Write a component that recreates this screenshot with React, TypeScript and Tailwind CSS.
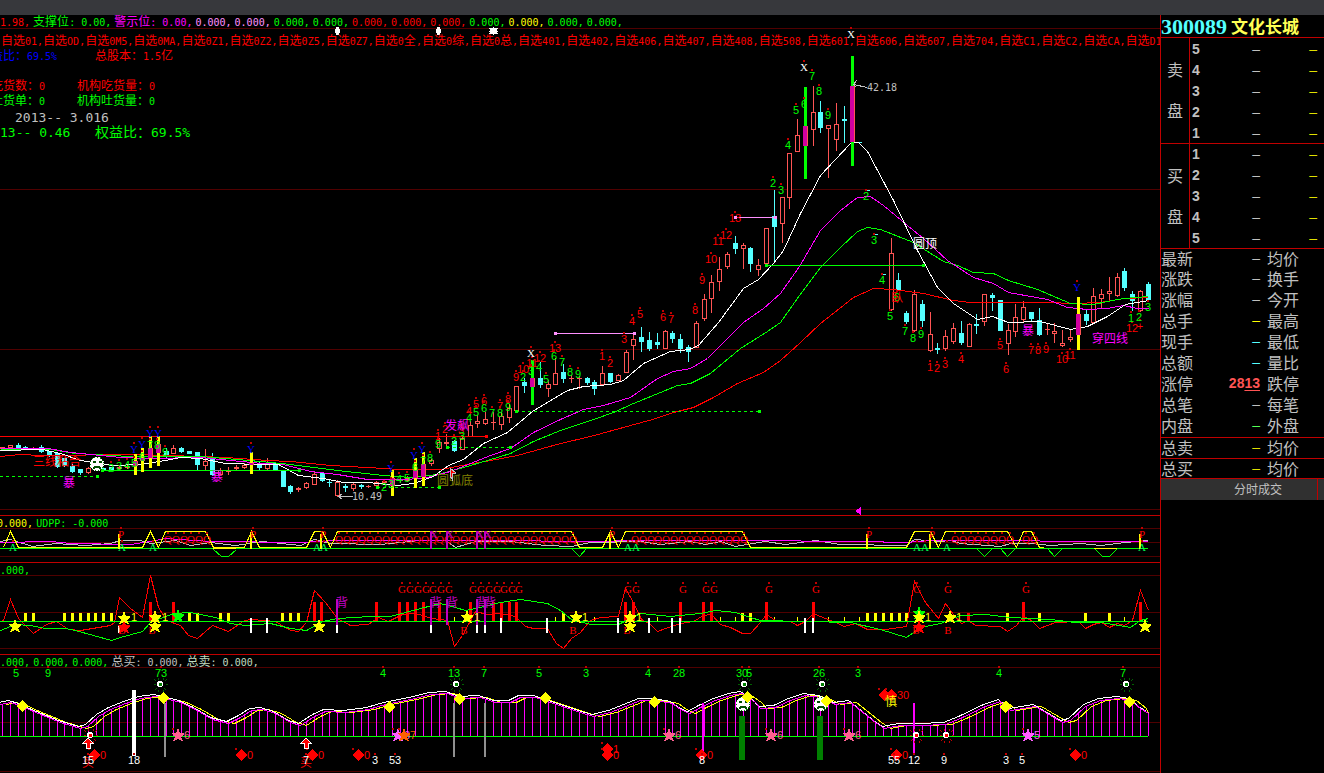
import { Fragment } from 'react';
import type { ReactNode } from 'react';

type Point = [number, number];
type Mark = [x: number, y: number, text: string];
// high, body top, body bottom, low, kind (r = up, b = down)
type Candle = [number, number, number, number, string];

const RED = '#ff0000';
const LIME = '#00ff00';
const YELLOW = '#ffff00';
const MAGENTA = '#ff00ff';
const DOWN = '#54ffff';
const UP = '#ff5454';

const barX = (i: number) => Math.round(2 + 7.795 * i);

const parse = (s: string): Point[] =>
  s.split(' ').map((p) => p.split(',').map(Number) as Point);

const candles: (Candle | null)[] = [
  [447, 447, 449, 449, 'r'], [445, 445, 448, 448, 'r'], [443, 445, 449, 449, 'b'], [446, 447, 449, 449, 'b'],
  [447, 448, 449, 450, 'r'], [445, 447, 452, 453, 'b'], [451, 451, 456, 457, 'b'], [453, 453, 467, 468, 'b'],
  [458, 458, 466, 467, 'b'], [464, 466, 472, 473, 'b'], [469, 469, 473, 475, 'b'], [467, 468, 473, 474, 'r'],
  null, [467, 468, 471, 471, 'b'], [467, 467, 470, 471, 'b'], [466, 467, 469, 470, 'r'],
  [465, 466, 468, 469, 'r'], null, null, null,
  null, [448, 451, 456, 458, 'b'], [445, 448, 454, 454, 'r'], [447, 448, 452, 453, 'b'],
  [451, 451, 454, 454, 'b'], [452, 452, 465, 470, 'b'], [449, 461, 466, 470, 'r'], [453, 459, 475, 476, 'b'],
  [468, 470, 475, 475, 'r'], [467, 470, 472, 475, 'r'], [465, 467, 469, 471, 'r'], [463, 465, 468, 469, 'r'],
  null, [462, 463, 468, 470, 'b'], [458, 464, 469, 470, 'r'], [462, 463, 471, 471, 'b'],
  [471, 471, 487, 487, 'b'], [485, 486, 492, 494, 'b'], [487, 488, 490, 492, 'r'], [482, 483, 488, 489, 'r'],
  [472, 474, 485, 485, 'r'], [473, 473, 481, 482, 'b'], [479, 482, 483, 487, 'b'], [480, 482, 496, 497, 'r'],
  [484, 486, 488, 492, 'b'], [483, 484, 489, 491, 'r'], [484, 485, 487, 489, 'b'], [485, 486, 487, 488, 'r'],
  [481, 482, 486, 487, 'r'], [479, 481, 483, 484, 'r'], null, [478, 480, 481, 483, 'r'],
  [476, 478, 481, 482, 'r'], null, null, [459, 460, 464, 466, 'r'],
  [438, 442, 449, 453, 'r'], [434, 442, 444, 448, 'r'], [440, 441, 451, 452, 'b'], [436, 438, 450, 450, 'r'],
  [421, 425, 437, 437, 'r'], [415, 421, 424, 428, 'r'], [412, 419, 424, 425, 'r'], [412, 422, 423, 430, 'r'],
  [412, 416, 425, 430, 'r'], [404, 408, 418, 423, 'r'], [386, 386, 411, 412, 'r'], [378, 382, 386, 393, 'b'],
  null, [362, 378, 385, 388, 'b'], [380, 384, 389, 397, 'r'], [358, 373, 385, 385, 'r'],
  [364, 372, 379, 383, 'b'], [375, 378, 379, 383, 'r'], [376, 378, 379, 389, 'r'], [377, 378, 383, 385, 'b'],
  [380, 382, 389, 395, 'b'], [366, 373, 385, 385, 'r'], [373, 373, 382, 383, 'b'], [374, 375, 381, 381, 'r'],
  [350, 352, 373, 373, 'r'], [333, 339, 346, 360, 'r'], [327, 337, 342, 352, 'b'], [332, 340, 349, 351, 'b'],
  [333, 342, 345, 349, 'b'], [330, 331, 349, 349, 'r'], [331, 333, 339, 343, 'b'], [334, 339, 349, 353, 'b'],
  [345, 347, 352, 362, 'b'], [321, 323, 348, 348, 'r'], [294, 299, 319, 321, 'r'], [275, 282, 299, 313, 'r'],
  [257, 269, 282, 291, 'r'], [252, 254, 267, 269, 'r'], [236, 243, 249, 254, 'b'], [243, 245, 249, 269, 'r'],
  [247, 248, 264, 272, 'b'], [259, 265, 270, 276, 'r'], [228, 228, 264, 265, 'r'], [190, 216, 227, 262, 'b'],
  [197, 197, 224, 243, 'r'], [153, 153, 198, 209, 'r'], [119, 135, 152, 152, 'r'], null,
  [86, 112, 130, 146, 'r'], [101, 112, 128, 133, 'b'], [125, 125, 129, 178, 'r'], [103, 124, 140, 151, 'r'],
  [106, 119, 121, 143, 'b'], null, [142, 142, 143, 143, 'b'], [190, 190, 191, 191, 'b'],
  [234, 234, 235, 235, 'b'], [274, 274, 275, 275, 'b'], [238, 253, 310, 311, 'r'], [273, 280, 290, 291, 'b'],
  [311, 313, 322, 324, 'b'], [290, 294, 331, 332, 'r'], [300, 304, 321, 327, 'b'], [312, 334, 351, 352, 'r'],
  [343, 348, 350, 354, 'b'], [330, 336, 349, 351, 'r'], [323, 328, 342, 344, 'r'], [321, 333, 343, 345, 'b'],
  [323, 324, 347, 347, 'r'], [314, 324, 326, 334, 'b'], [294, 294, 322, 326, 'r'], [293, 295, 298, 311, 'b'],
  [300, 300, 331, 331, 'b'], [324, 330, 344, 355, 'r'], [304, 317, 332, 337, 'r'], [301, 307, 320, 322, 'r'],
  [312, 312, 319, 322, 'b'], [308, 320, 335, 336, 'b'], [323, 329, 330, 335, 'r'], [323, 331, 334, 343, 'r'],
  [330, 343, 346, 347, 'r'], [330, 337, 340, 342, 'r'], null, [310, 314, 321, 325, 'b'],
  [288, 296, 323, 323, 'r'], [289, 294, 299, 309, 'r'], [277, 291, 294, 300, 'r'], [273, 277, 296, 297, 'r'],
  [268, 271, 288, 291, 'b'], [291, 294, 301, 311, 'b'], [290, 291, 311, 312, 'r'], [282, 284, 300, 301, 'b'],
];

// full bar from top to bottom, coloured core from a to b
const signalBars = [
  { i: 17, top: 454, bottom: 475, a: 461, b: 466, color: YELLOW },
  { i: 18, top: 448, bottom: 472, a: 458, b: 461, color: YELLOW },
  { i: 19, top: 436, bottom: 468, a: 448, b: 458, color: YELLOW },
  { i: 20, top: 436, bottom: 466, a: 444, b: 453, color: YELLOW },
  { i: 32, top: 452, bottom: 474, a: 463, b: 465, color: YELLOW },
  { i: 50, top: 470, bottom: 496, a: 478, b: 486, color: YELLOW },
  { i: 53, top: 458, bottom: 488, a: 470, b: 478, color: YELLOW },
  { i: 54, top: 452, bottom: 486, a: 464, b: 477, color: YELLOW },
  { i: 68, top: 360, bottom: 405, a: 378, b: 387, color: LIME },
  { i: 103, top: 87, bottom: 179, a: 126, b: 146, color: LIME },
  { i: 109, top: 56, bottom: 166, a: 86, b: 142, color: LIME },
  { i: 138, top: 297, bottom: 350, a: 314, b: 335, color: YELLOW },
];

const averages = [
  {
    color: RED,
    points:
      '0,456 20,454 40,455 133,454 200,456 225,457 267,460 290,461 330,465 367,467 400,469 440,469 467,464 490,460 517,455 560,443 590,436 652,419 673,412 693,407 713,397 737,383 763,372 780,360 799,343 820,323 853,297 873,288 893,289 923,293 953,300 970,302 1047,302 1073,303 1100,302 1123,298 1148,297',
  },
  {
    color: LIME,
    points:
      '0,449 50,449 75,453 130,456 200,456 260,461 290,464 337,470 383,475 410,477 437,474 463,467 487,460 510,453 533,441 560,430 593,419 613,412 633,403 660,392 677,385 690,383 710,373 740,348 767,331 780,322 799,295 820,267 840,247 857,231 867,227 880,229 913,242 943,261 957,265 973,272 993,273 1008,280 1037,289 1070,303 1093,304 1107,301 1123,298 1148,296',
  },
  {
    color: MAGENTA,
    points:
      '0,448 48,448 70,452 100,455 120,457 150,458 200,457 220,459 262,463 283,464 310,471 337,474 367,479 400,479 423,478 450,471 470,463 490,455 510,448 533,432 560,419 583,409 603,405 630,397 657,378 673,371 690,368 707,358 743,322 763,308 780,293 799,266 820,230 840,210 857,197 870,196 883,205 913,230 923,238 947,260 973,277 993,283 1008,292 1047,299 1067,307 1087,309 1107,308 1123,305 1137,308 1148,308',
  },
  {
    color: '#ffffff',
    points:
      '0,450 42,449 60,453 80,460 112,465 140,464 165,460 180,457 200,458 225,463 262,464 278,464 298,475 323,478 343,482 367,482 397,485 413,483 433,476 448,465 463,459 483,443 507,432 532,411 567,390 583,386 610,384 623,380 643,363 670,351 689,349 698,345 718,322 743,288 758,279 773,263 783,250 800,213 820,175 850,143 858,142 867,151 893,200 917,250 937,287 953,303 977,319 992,316 1008,322 1040,321 1070,329 1087,326 1107,316 1125,304 1148,300',
  },
];

const levels = [
  { x1: 0, x2: 486, y: 436, color: RED },
  { x1: 102, x2: 299, y: 470, color: LIME },
  { x1: 0, x2: 97, y: 476, color: LIME, dash: true },
  { x1: 377, x2: 439, y: 487, color: LIME, dash: true },
  { x1: 447, x2: 510, y: 447, color: LIME, dash: true },
  { x1: 516, x2: 759, y: 411, color: LIME, dash: true },
  { x1: 766, x2: 923, y: 265, color: LIME },
  { x1: 555, x2: 634, y: 333, color: '#ff90ff' },
  { x1: 735, x2: 775, y: 217, color: '#ff90ff' },
];

const greenCounts: Mark[] = [
  [111, 468, '2'], [119, 466, '3'], [127, 465, '4'], [134, 463, '5'], [142, 457, '6'], [150, 445, '7'],
  [157, 445, '8'], [165, 452, '9'], [384, 487, '2'], [391, 484, '3'], [399, 479, '4'], [407, 478, '5'],
  [415, 467, '6'], [423, 461, '7'], [430, 458, '8'], [438, 444, '9'], [454, 441, '2'], [462, 436, '3'],
  [469, 418, '4'], [476, 412, '5'], [484, 408, '6'], [492, 413, '7'], [500, 413, '8'], [508, 407, '9'],
  [523, 377, '2'], [531, 371, '3'], [539, 367, '4'], [546, 379, '5'], [554, 356, '6'], [562, 362, '7'],
  [570, 372, '8'], [578, 374, '9'], [773, 183, '2'], [781, 190, '3'], [788, 145, '4'], [796, 110, '5'],
  [804, 104, '6'], [812, 76, '7'], [819, 91, '8'], [828, 115, '9'], [866, 196, '2'], [874, 240, '3'],
  [882, 280, '4'], [890, 316, '5'], [897, 297, '6'], [905, 331, '7'], [913, 338, '8'], [921, 334, '9'],
  [1131, 318, '1'], [1139, 317, '2'], [1148, 307, '3'],
];

const redCounts: Mark[] = [
  [438, 436, '1'], [445, 429, '2'], [461, 430, '3'], [469, 411, '4'], [476, 404, '5'], [484, 401, '6'],
  [500, 406, '7'], [508, 399, '8'], [516, 377, '9'], [523, 369, '10'], [532, 363, '11'], [540, 358, '12'],
  [555, 348, '13'], [602, 356, '1'], [610, 363, '2'], [624, 339, '3'], [632, 321, '4'], [640, 314, '5'],
  [663, 317, '6'], [671, 319, '7'], [695, 310, '8'], [702, 280, '9'], [711, 259, '10'], [718, 241, '11'],
  [726, 235, '12'], [735, 218, '13'], [930, 367, '1'], [937, 368, '2'], [945, 364, '3'], [961, 359, '4'],
  [1000, 345, '5'], [1006, 369, '6'], [1031, 350, '7'], [1038, 350, '8'], [1046, 349, '9'], [1062, 359, '10'],
  [1070, 355, '11'], [1132, 328, '12'], [1140, 326, '+'],
];

const blueMarks: Mark[] = [
  [134, 449, 'Y'], [142, 444, 'Y'], [150, 433, 'Y'], [158, 433, 'Y'], [251, 449, 'Y'],
  [391, 468, 'Y'], [414, 455, 'Y'], [422, 449, 'Y'], [1077, 287, 'Y'],
];

const whiteMarks: Mark[] = [[531, 353, 'X'], [804, 67, 'X'], [851, 34, 'X']];

const chartWords = [
  { x: 33, y: 461, text: '三线粘合', color: RED },
  { x: 63, y: 482, text: '暴', color: MAGENTA },
  { x: 211, y: 476, text: '暴', color: MAGENTA },
  { x: 445, y: 425, text: '发飙', color: MAGENTA },
  { x: 437, y: 480, text: '圆弧底', color: '#808000' },
  { x: 913, y: 243, text: '圆顶', color: '#ffffff' },
  { x: 891, y: 297, text: '臥', color: RED },
  { x: 1022, y: 330, text: '暴', color: MAGENTA },
  { x: 1092, y: 338, text: '穿四线', color: MAGENTA },
];

const run = (start: number, count: number, y: number, text: string): Mark[] =>
  Array.from({ length: count }, (_, i) => [Math.round(start + i * 7.8), y, text] as Mark);

const qMarks: Mark[] = [
  ...run(168, 6, 539, 'Q'), ...run(339, 31, 539, 'Q'), ...run(635, 15, 539, 'Q'),
  ...run(955, 8, 539, 'Q'), ...run(1026, 2, 539, 'Q'),
];
const pMarks = [121, 253, 323, 612, 869, 932, 1142].map((x): Mark => [x, 534, 'P']);
const aMarks = [13, 122, 153, 317, 324, 628, 636, 917, 925, 947, 1142].map((x): Mark => [x, 547, 'A']);
const purpleX = [431, 447, 477, 485];

const udYellow =
  '3,547 10,531 18,547 142,547 150,531 158,547 165,531 205,531 213,547 236,547 244,547 251,531 259,547 306,547 314,531 322,531 330,547 337,531 571,531 579,547 586,547 602,547 610,531 618,547 625,531 742,531 750,547 906,547 914,531 930,531 938,547 945,531 1007,531 1016,547 1023,531 1031,531 1039,547 1047,548 1062,548';
const udGrey =
  '0,541 10,539 32,546 55,543 85,545 110,543 120,540 140,540 150,543 175,540 190,545 210,542 235,545 262,541 300,545 314,539 330,543 380,544 420,540 445,540 455,547 475,541 510,541 545,545 571,546 590,542 640,541 660,544 690,541 705,544 720,541 735,546 765,541 785,544 815,540 840,544 906,545 914,539 940,541 950,540 960,543 1000,546 1010,543 1030,543 1050,545 1080,543 1100,545 1125,542 1148,540';
const udMagenta =
  '0,542 50,541 70,543 130,544 150,541 165,538 210,541 300,542 337,540 500,540 580,541 650,540 740,540 860,541 906,542 930,540 1148,541';
const udDips = [
  '213,549 221,556 228,556 236,549', '571,548 579,556 586,548', '976,548 984,556 992,548',
  '1000,548 1007,556 1015,548', '1047,548 1054,556 1062,548', '1094,548 1102,556 1109,556 1117,548',
];

const swingRed =
  '0,621 3,620 10,599 18,618 33,633 46,624 56,621 68,629 80,630 110,625 114,622 119,597 130,608 142,617 150,575 158,607 166,620 180,625 188,635 197,638 212,625 228,631 244,620 251,619 275,621 290,630 298,631 306,622 314,590 325,602 337,618 350,625 368,624 378,617 388,621 402,614 415,613 432,618 447,620 454,646 462,635 475,611 487,614 500,613 515,616 525,626 533,628 547,628 556,643 563,648 571,638 580,632 590,620 600,617 618,616 625,588 633,602 641,619 650,624 657,631 668,627 680,623 693,621 703,615 711,614 720,624 730,627 742,633 750,633 760,622 766,614 775,620 790,621 797,625 805,621 813,613 820,616 835,622 844,626 855,623 867,629 885,629 906,626 914,581 925,602 938,618 945,603 953,614 961,623 968,620 975,625 1000,626 1007,631 1016,625 1023,616 1031,620 1039,628 1055,622 1078,621 1085,628 1093,624 1101,622 1109,627 1117,623 1124,625 1132,620 1140,590 1148,610';
const swingGreen =
  '0,630 15,624 30,625 45,628 65,628 75,630 111,640 120,637 142,631 150,622 173,613 190,612 215,617 230,623 245,625 270,623 290,628 306,630 322,621 337,618 370,616 390,616 405,612 420,608 440,603 455,607 465,610 475,608 500,602 520,599 547,603 560,610 571,619 590,624 618,624 640,613 670,616 700,613 715,610 735,612 750,617 760,620 850,622 880,629 906,637 920,627 940,623 960,615 985,614 1010,617 1050,619 1075,622 1100,622 1130,627 1140,620 1148,618';

const yellowBars = [
  25, 33, 64, 72, 80, 88, 95, 103, 111, 189, 197, 220, 228, 282, 290, 298, 563, 742, 750,
  867, 875, 883, 891, 899, 906, 1007, 1039, 1085, 1109,
];
const yellowTicks = [454, 555, 594, 657, 720, 735, 774, 797, 828, 844, 859, 1124];
const whiteBars = [251, 267, 501, 547, 618, 649, 672, 680, 805, 813];
const redBars = [
  150, 173, 314, 321, 376, 399, 407, 415, 423, 439, 470, 493, 501, 509, 516, 625, 633, 680, 703, 711,
  766, 813, 1023, 1140,
];
const gMarks: Mark[] = [
  402, 410, 418, 426, 433, 441, 449, 473, 481, 489, 497, 504, 512, 519, 628, 636, 683, 706, 714, 769, 816, 917, 948, 1026,
].map((x): Mark => [x, 589, 'G']);
const bMarks = [122, 152, 464, 573, 627, 916, 948].map((x): Mark => [x, 630, 'B']);
const oneMarks = [134, 165, 477, 585, 639, 928, 959].map((x): Mark => [x, 617, '1']);
const swingStars: [number, number, string][] = [
  [178, 616, LIME], [919, 613, LIME], [124, 627, RED], [919, 627, RED],
  [15, 626, YELLOW], [124, 618, YELLOW], [155, 617, YELLOW], [155, 626, YELLOW], [319, 626, YELLOW],
  [467, 617, YELLOW], [576, 617, YELLOW], [630, 617, YELLOW], [630, 626, YELLOW], [919, 617, YELLOW],
  [950, 617, YELLOW], [1145, 626, YELLOW],
];

const trend = parse(
  '0,704 10,702 20,705 33,711 60,722 80,728 87,726 98,716 110,709 125,703 140,698 155,696 165,698 180,702 195,709 212,719 228,723 240,717 251,710 262,709 275,713 290,722 300,725 314,716 325,711 345,712 368,709 385,704 400,701 415,698 430,694 447,693 460,698 480,697 495,702 510,702 520,697 535,697 550,702 565,707 580,712 593,716 610,712 625,706 640,700 655,700 672,703 680,709 689,713 700,707 715,700 730,695 742,693 755,702 760,708 775,707 790,700 805,695 820,697 835,704 850,702 860,710 875,722 884,728 900,725 920,725 945,724 960,718 985,706 1000,701 1010,710 1035,706 1045,712 1062,722 1070,720 1085,706 1100,700 1118,698 1130,700 1140,708 1148,713',
);
const shifted = (dx: number, dy: number) =>
  trend.map(([x, y]) => `${Math.min(x + dx, 1148)},${y + dy}`).join(' ');
const trendAt = (x: number) => {
  const n = trend.findIndex((p) => p[0] >= x);
  if (n <= 0) return trend[0][1];
  const [x0, y0] = trend[n - 1];
  const [x1, y1] = trend[n];
  return Math.round(y0 + ((x - x0) / (x1 - x0)) * (y1 - y0));
};

const topCounts: Mark[] = [
  [16, 673, '5'], [48, 673, '9'], [161, 673, '73'], [383, 673, '4'], [454, 673, '13'], [484, 673, '7'],
  [539, 673, '5'], [586, 673, '3'], [648, 673, '4'], [679, 673, '28'], [742, 673, '30'], [749, 673, '5'],
  [819, 673, '26'], [858, 673, '3'], [999, 673, '4'], [1123, 673, '7'],
];
const bottomCounts: Mark[] = [
  [88, 760, '15'], [134, 760, '18'], [306, 760, '7'], [375, 760, '3'], [395, 760, '53'], [702, 760, '8'],
  [894, 760, '55'], [914, 760, '12'], [944, 760, '9'], [1006, 760, '3'], [1022, 760, '5'],
];
const yellowDiamonds: Point[] = [
  [22, 706], [163, 698], [389, 707], [459, 699], [545, 698], [654, 702], [747, 697], [826, 701], [1005, 707], [1129, 702],
];
const redDiamonds: [number, number, string][] = [
  [94, 755, '0'], [241, 755, '0'], [312, 755, '0'], [358, 755, '0'], [607, 749, '1'], [607, 755, '0'],
  [701, 755, '0'], [896, 755, '0'], [1075, 755, '0'], [884, 695, ''], [891, 695, '30'],
];
const trendStars: [number, number, string, string][] = [
  [178, 735, '#ff6090', '6'], [398, 735, '#ff60ff', '6'], [404, 735, '#ff6000', '7'], [669, 735, '#ff6090', '6'],
  [771, 735, '#ff6090', '6'], [849, 735, '#ff6090', '6'], [1028, 735, '#ff60ff', '5'],
];

const zeros = (n: number, color: string) => Array.from({ length: n }, () => ({ text: '0.000,', color }));

const mainHeader = [
  { text: '1.98,', color: 'text-[#ff0000]' },
  { text: '支撑位: 0.00,', color: 'text-[#00ff00]' },
  { text: '警示位: 0.00,', color: 'text-[#ff00ff]' },
  ...zeros(2, 'text-[#ff90ff]'),
  ...zeros(2, 'text-[#00ff00]'),
  ...zeros(3, 'text-[#ff0000]'),
  ...zeros(1, 'text-[#00ff00]'),
  ...zeros(1, 'text-[#ffff00]'),
  ...zeros(2, 'text-[#00ff00]'),
];

const watchlists =
  '自选01,自选OD,自选0M5,自选0MA,自选0Z1,自选0Z2,自选0Z5,自选0Z7,自选0全,自选0综,自选0总,自选401,自选402,自选406,自选407,自选408,自选508,自选601,自选606,自选607,自选704,自选C1,自选C2,自选CA,自选D1,';

const quoteRows = [
  { label: '最新', value: '–', tone: 'text-[#c0c0c0]', other: '均价', height: 'h-5' },
  { label: '涨跌', value: '–', tone: 'text-[#c0c0c0]', other: '换手' },
  { label: '涨幅', value: '–', tone: 'text-[#c0c0c0]', other: '今开' },
  { label: '总手', value: '–', tone: 'text-[#ffff00]', other: '最高' },
  { label: '现手', value: '–', tone: 'text-[#54ffff]', other: '最低' },
  { label: '总额', value: '–', tone: 'text-[#54ffff]', other: '量比' },
  { label: '涨停', value: '2813', tone: 'text-[#ff5454]', other: '跌停' },
  { label: '总笔', value: '–', tone: 'text-[#c0c0c0]', other: '每笔' },
  { label: '内盘', value: '–', tone: 'text-[#54ff54]', other: '外盘' },
  { label: '总卖', value: '–', tone: 'text-[#e0e000]', other: '均价', rule: true },
  { label: '总买', value: '–', tone: 'text-[#e0e000]', other: '均价', rule: true, height: 'h-5' },
];

// Chinese runs take the parent size, Latin runs a narrower half-width face
function Mixed({ text, latin = 'text-[10px]' }: { text: string; latin?: string }) {
  return (
    <>
      {text.split(/([\u3000-\u9fff\uff00-\uffef]+)/).map((part, i) =>
        i % 2 ? (
          <Fragment key={i}>{part}</Fragment>
        ) : (
          <span key={i} className={`font-['DejaVu_Sans_Mono',monospace] ${latin}`}>
            {part}
          </span>
        ),
      )}
    </>
  );
}

function PanelHeader({ items, className }: { items: { text: string; color: string }[]; className: string }) {
  return (
    <div className={`flex gap-[3px] whitespace-pre text-[12px] leading-[11px] ${className}`}>
      {items.map((item, i) => (
        <span key={i} className={`shrink-0 ${item.color}`}>
          <Mixed text={item.text} />
        </span>
      ))}
    </div>
  );
}

function Marks({ items, color, dot = true, serif = false }: { items: Mark[]; color: string; dot?: boolean; serif?: boolean }) {
  return (
    <g fill={color} textAnchor="middle">
      {items.map(([x, y, text], i) => (
        <g key={i}>
          <text
            x={x}
            y={y + 4}
            className={serif ? "font-['Liberation_Serif'] text-[11px]" : "font-['Liberation_Sans'] text-[11px]"}
          >
            {text}
          </text>
          {dot && <rect x={x - 1} y={y - 7} width={2} height={2} fill="#c00000" />}
        </g>
      ))}
    </g>
  );
}

function Bars({ xs, y1, y2, w, color }: { xs: number[]; y1: number; y2: number; w: number; color: string }) {
  return (
    <g fill={color}>
      {xs.map((x) => (
        <rect key={x} x={x - Math.floor(w / 2)} y={y1} width={w} height={y2 - y1} />
      ))}
    </g>
  );
}

function Line({ points, color }: { points: string; color: string }) {
  return <polyline points={points} fill="none" stroke={color} strokeWidth={1} transform="translate(0.5 0.5)" />;
}

function Star({ x, y, color }: { x: number; y: number; color: string }) {
  return (
    <polygon
      points="0,-7 2,-2 6,-2 6,-1 3,2 5,6 4,6 0,4 -4,6 -5,6 -3,2 -6,-1 -6,-2 -2,-2"
      fill={color}
      transform={`translate(${x} ${y})`}
    />
  );
}

function Diamond({ x, y, color }: { x: number; y: number; color: string }) {
  return <polygon points={`${x},${y - 6} ${x + 6},${y} ${x},${y + 6} ${x - 6},${y}`} fill={color} />;
}

function Sun({ x, y, rays, core }: { x: number; y: number; rays: string; core: string }) {
  return (
    <g transform={`translate(${x} ${y})`}>
      <path
        d="M-2 -7v2M3 -7v2M-2 5v2M3 5v2M-7 0h2M5 0h2M-6 -5l2 2M4 4l2 2M6 -5l-2 2M-4 4l-2 2"
        stroke={rays}
        transform="translate(0.5 0.5)"
      />
      <circle r={3} fill="#ffffff" />
      <rect x={-1} y={-1} width={3} height={3} fill={core} />
    </g>
  );
}

function Face({ x, y }: { x: number; y: number }) {
  return (
    <g transform={`translate(${x} ${y})`}>
      <circle r={7} fill="#ffffff" stroke="#008000" strokeDasharray="1 2" />
      <path d="M-4 -3h3v2h-3zM2 -3h3v2h-3zM-3 2h6v1h1v2h-2v-1h-4v1h-2v-2h1z" fill="#005000" />
    </g>
  );
}

function Grid({ ys }: { ys: number[] }) {
  return (
    <g fill="#500000">
      {ys.map((y) => (
        <rect key={y} x={0} y={y} width={1160} height={1} />
      ))}
    </g>
  );
}

function Chart({ top, height, children }: { top: number; height: number; children: ReactNode }) {
  return (
    <svg viewBox={`0 ${top} 1160 ${height}`} shapeRendering="crispEdges" className="block w-full overflow-visible">
      {children}
    </svg>
  );
}

function PriceChart() {
  return (
    <Chart top={28} height={487}>
      <Grid ys={[28, 189, 349, 509]} />
      {candles.map((c, i) => {
        if (!c) return null;
        const [hi, top, bottom, lo, kind] = c;
        const x = barX(i);
        if (kind === 'b') {
          return (
            <g key={i} fill={DOWN}>
              <rect x={x} y={hi} width={1} height={lo - hi} />
              <rect x={x - 2} y={top} width={5} height={bottom - top} />
            </g>
          );
        }
        return (
          <g key={i} fill={UP}>
            <rect x={x} y={hi} width={1} height={top - hi} />
            <rect x={x} y={bottom} width={1} height={lo - bottom} />
            <rect x={x - 2} y={top} width={5} height={Math.max(bottom - top, 1)} />
            {bottom - top > 2 && <rect x={x - 1} y={top + 1} width={3} height={bottom - top - 2} fill="#000000" />}
          </g>
        );
      })}
      {averages.map((line) => (
        <Line key={line.color} points={line.points} color={line.color} />
      ))}
      {levels.map((l) => (
        <g key={l.y} fill={l.color}>
          {l.dash ? (
            <line x1={l.x1} x2={l.x2} y1={l.y + 0.5} y2={l.y + 0.5} stroke={l.color} strokeDasharray="3 3" />
          ) : (
            <rect x={l.x1} y={l.y} width={l.x2 - l.x1} height={1} />
          )}
          {l.x1 > 0 && <rect x={l.x1 - 1} y={l.y - 1} width={3} height={3} />}
          <rect x={l.x2 - 1} y={l.y - 1} width={3} height={3} />
        </g>
      ))}
      {signalBars.map((b) => (
        <g key={b.i}>
          <rect x={barX(b.i) - 1} y={b.top} width={3} height={b.bottom - b.top} fill={b.color} />
          <rect x={barX(b.i) - 2} y={b.a} width={4} height={b.b - b.a} fill="#d000a0" />
          <rect x={barX(b.i) + 2} y={b.a} width={1} height={b.b - b.a} fill={UP} />
        </g>
      ))}
      <Marks items={redCounts} color={RED} />
      <Marks items={greenCounts} color={LIME} />
      <Marks items={blueMarks} color="#0000ff" serif />
      <Marks items={whiteMarks} color="#ffffff" serif />
      {chartWords.map((w, i) => (
        <text key={i} x={w.x} y={w.y + 5} fill={w.color} className="text-[12px]">
          {w.text}
        </text>
      ))}
      <Face x={97} y={464} />
      <path d="M338 496h14M338 496l4 -3M338 496l4 3" transform="translate(0.5 0.5)" stroke="#c0c0c0" fill="none" />
      <text x={352} y={500} fill="#c0c0c0" className="font-['DejaVu_Sans_Mono'] text-[10px]">10.49</text>
      <path d="M853 84l14 3M853 84l3 -4M853 84l3 3" transform="translate(0.5 0.5)" stroke="#c0c0c0" fill="none" />
      <text x={867} y={91} fill="#c0c0c0" className="font-['DejaVu_Sans_Mono'] text-[10px]">42.18</text>
      <path d="M450 468l6 5l-4 1v5l-2 -3z" fill={RED} stroke="#c0c0c0" />
      {[335, 436].map((x) => (
        <path key={x} d={`M${x + 1} 27h3v2h1v4h-1v2h-3v-2h-1v-4h1z`} fill="#ffffff" />
      ))}
      <path d="M490 28h7v6h-7zM493 27h1v8h-1zM489 28h1v1h-1zM497 28h1v1h-1zM489 31h9v1h-9zM489 33h1v1h-1zM497 33h1v1h-1z" fill="#ffffff" />
      <polygon points="855,511 861,507 861,515" fill={MAGENTA} />
    </Chart>
  );
}

function UdppChart() {
  return (
    <Chart top={528} height={34}>
      <Grid ys={[528, 542, 556]} />
      <Line points={udGrey} color="#c0c0c0" />
      <Line points={udMagenta} color={MAGENTA} />
      <Line points={udYellow} color={YELLOW} />
      <rect x={0} y={548} width={1148} height={1} fill={LIME} />
      {udDips.map((d) => (
        <Line key={d} points={d} color={LIME} />
      ))}
      <rect x={1094} y={548} width={23} height={1} fill={YELLOW} />
      <rect x={213} y={548} width={23} height={1} fill={YELLOW} />
      <Marks items={qMarks} color={RED} serif />
      <Bars xs={[119, 251, 321, 610, 867, 930, 1140]} y1={534} y2={549} w={2} color={YELLOW} />
      <Bars xs={purpleX} y1={531} y2={549} w={2} color="#c000c0" />
      <Marks items={purpleX.map((x): Mark => [x + 3, 534, 'X'])} color="#c000c0" dot={false} serif />
      <Marks items={pMarks} color={RED} serif />
      <Marks items={aMarks} color="#00ff54" serif />
    </Chart>
  );
}

function SwingChart() {
  return (
    <Chart top={575} height={79}>
      <Grid ys={[575, 612, 648]} />
      <Bars xs={redBars} y1={602} y2={621} w={3} color={RED} />
      <Bars xs={[968]} y1={613} y2={621} w={3} color={RED} />
      <Bars xs={yellowBars} y1={613} y2={621} w={3} color={YELLOW} />
      <Bars xs={yellowTicks} y1={617} y2={621} w={1} color={YELLOW} />
      <Line points={swingRed} color={RED} />
      <Line points={swingGreen} color={LIME} />
      <rect x={0} y={621} width={1148} height={1} fill={LIME} />
      <Bars xs={whiteBars} y1={618} y2={633} w={2} color="#ffffff" />
      <Bars xs={[119, 337, 431, 477, 485]} y1={625} y2={633} w={2} color="#ffffff" />
      <Bars xs={[337, ...purpleX]} y1={599} y2={625} w={2} color="#c000c0" />
      {[337, ...purpleX].map((x) => (
        <text key={x} x={x - 1} y={607} fill="#c000c0" className="text-[12px]">背</text>
      ))}
      <Marks items={gMarks} color={RED} serif />
      <Marks items={bMarks} color={RED} serif dot={false} />
      {swingStars.map(([x, y, color], i) => (
        <Star key={i} x={x} y={y} color={color} />
      ))}
      <Marks items={oneMarks} color={YELLOW} dot={false} />
    </Chart>
  );
}

function TrendChart() {
  return (
    <Chart top={667} height={106}>
      <Grid ys={[667, 722, 771]} />
      <g fill={MAGENTA}>
        {Array.from({ length: 148 }, (_, i) => {
          const x = barX(i);
          return <rect key={i} x={x} y={trendAt(x)} width={1} height={736 - trendAt(x)} />;
        })}
      </g>
      <rect x={0} y={736} width={1148} height={1} fill={LIME} />
      <Line points={shifted(6, 0)} color={YELLOW} />
      <Line points={shifted(-2, -2)} color="#ffffff" />
      <Line points={shifted(0, 0)} color={MAGENTA} />
      <rect x={132} y={690} width={4} height={66} fill="#ffffff" />
      <Bars xs={[165, 454, 485]} y1={703} y2={757} w={2} color="#909090" />
      <Bars xs={[703, 914]} y1={703} y2={754} w={2} color={MAGENTA} />
      <Face x={743} y={704} />
      <Face x={821} y={704} />
      <Bars xs={[742, 820]} y1={716} y2={760} w={6} color="#008000" />
      {[160, 456, 744, 822, 1126].map((x) => (
        <Sun key={x} x={x} y={684} rays="#006000" core="#008000" />
      ))}
      {[90, 916, 946].map((x) => (
        <Sun key={x} x={x} y={735} rays="#c00000" core={RED} />
      ))}
      {yellowDiamonds.map(([x, y]) => (
        <Diamond key={x} x={x} y={y} color={YELLOW} />
      ))}
      {redDiamonds.map(([x, y, text], i) => (
        <g key={i}>
          <Diamond x={x} y={y} color={RED} />
          <rect x={x - 6} y={y - 7} width={2} height={2} fill="#c00000" />
          <text x={x + 6} y={y + 4} fill={RED} className="font-['Liberation_Sans'] text-[11px]">{text}</text>
        </g>
      ))}
      {trendStars.map(([x, y, color, text]) => (
        <g key={x}>
          <Star x={x} y={y} color={color} />
          <rect x={x - 6} y={y - 7} width={2} height={2} fill="#c00000" />
          <text x={x + 6} y={y + 4} fill={color} className="font-['Liberation_Sans'] text-[11px]">{text}</text>
        </g>
      ))}
      {[88, 306].map((x) => (
        <g key={x}>
          <path d={`M${x} 738l5 5h-3v5h-4v-5h-3z`} fill={RED} stroke="#ffffff" />
          <text x={x - 6} y={767} fill={RED} className="text-[12px]">买</text>
        </g>
      ))}
      <text x={885} y={706} fill={YELLOW} className="text-[12px]">慎</text>
      <Marks items={topCounts} color={LIME} />
      <Marks items={bottomCounts} color="#ffffff" />
    </Chart>
  );
}

function Notes() {
  return (
    <div className="absolute inset-x-0 top-0 overflow-hidden whitespace-pre pt-1 text-[12px] leading-[15px]">
      <div className="ml-px h-[15px] text-[#ff0000]">
        <Mixed text={watchlists} />
      </div>
      <div className="flex h-[15px]">
        <span className="-ml-[9px] w-[104px] text-[#0000ff]"><Mixed text="益比：69.5%" /></span>
        <span className="text-[#ff0000]"><Mixed text="总股本：1.5亿" /></span>
      </div>
      <div className="mt-[15px] flex h-[15px] text-[#ff0000]">
        <span className="-ml-[9px] w-[86px]"><Mixed text="吃货数：0" /></span>
        <span><Mixed text="机构吃货量：0" /></span>
      </div>
      <div className="flex h-[15px] text-[#00ff00]">
        <span className="-ml-[9px] w-[86px]"><Mixed text="吐货单：0" /></span>
        <span><Mixed text="机构吐货量：0" /></span>
      </div>
      <div className="mt-[2px] ml-[15px] h-[15px] text-[14px] text-[#c0c0c0]">
        <Mixed text="2013-- 3.016" latin="text-[13px]" />
      </div>
      <div className="flex h-5 text-[14px] text-[#00ff00]">
        <span className="w-[95px]"><Mixed text="13-- 0.46" latin="text-[13px]" /></span>
        <span><Mixed text="权益比：69.5%" latin="text-[13px]" /></span>
      </div>
    </div>
  );
}

function BookSide({ title, levels, className }: { title: string; levels: number[]; className?: string }) {
  return (
    <div className={`flex h-[105px] border-[#c00000] ${className ?? ''}`}>
      <div className="flex w-[29px] flex-col items-center justify-center gap-[17px] border-r border-[#c00000] pb-[2px] text-[16px] leading-6 text-[#c0c0c0]">
        {title.split('').map((ch) => (
          <span key={ch}>{ch}</span>
        ))}
      </div>
      <table className="flex-1 table-fixed border-separate border-spacing-0 font-['Liberation_Sans',sans-serif] text-[14px] leading-5">
        <tbody>
          {levels.map((n) => (
            <tr key={n}>
              <th scope="row" className="w-5 p-0 pl-[2px] text-left font-bold text-[#c0c0c0]">{n}</th>
              <td className="w-[50px] p-0 text-right text-[#c0c0c0]">–</td>
              <td className="p-0 pr-[7px] text-right text-[#e0e000]">–</td>
            </tr>
          ))}
        </tbody>
      </table>
    </div>
  );
}

function QuotePanel() {
  return (
    <aside className="flex w-[164px] shrink-0 flex-col border-l border-[#c00000]">
      <h1 className="flex h-[23px] items-center gap-1 border-b border-[#c00000] whitespace-nowrap">
        <span className="font-['Liberation_Serif',serif] text-[22px] font-bold text-[#54ffff]">300089</span>
        <span className="text-[17px] font-bold text-[#ffff54]">文化长城</span>
      </h1>
      <BookSide title="卖盘" levels={[5, 4, 3, 2, 1]} />
      <BookSide title="买盘" levels={[1, 2, 3, 4, 5]} className="border-t" />
      <table className="w-full table-fixed border-separate border-spacing-0 border-t border-[#c00000] text-[16px] leading-[18px] text-[#c0c0c0]">
        <tbody>
          {quoteRows.map((row, i) => {
            const cell = `${row.height ?? 'h-[21px]'} p-0 align-top border-[#c00000] ${row.rule ? 'border-t' : ''}`;
            return (
              <tr key={i}>
                <th scope="row" className={`${cell} w-[40px] text-left font-normal`}>{row.label}</th>
                <td className={`${cell} w-[59px] text-right font-['Liberation_Sans',sans-serif] text-[14px] ${row.tone}`}>
                  {row.value === '2813' ? (
                    <b>28<span className="underline underline-offset-2">13</span></b>
                  ) : (
                    row.value
                  )}
                </td>
                <td className={`${cell} pl-[7px]`}>{row.other}</td>
              </tr>
            );
          })}
        </tbody>
      </table>
      <div className="flex h-[22px] border-t border-[#c00000] bg-[#303030]">
        <button type="button" className="flex-1 border-r border-[#c00000] pb-[2px] pl-[38px] text-center text-[12px] text-[#c0c0c0]">
          分时成交
        </button>
        <span className="w-[6px]" />
      </div>
    </aside>
  );
}

export default function App() {
  return (
    <div className="flex min-h-screen flex-col overflow-hidden bg-black font-['Noto_Sans_CJK_SC',sans-serif]">
      <div className="h-[15px] bg-[#37383c]" />
      <div className="flex flex-1">
        <main className="min-w-0 flex-1">
          <PanelHeader items={mainHeader} className="h-[13px]" />
          <section className="relative">
            <PriceChart />
            <Notes />
          </section>
          <section className="border-t border-[#c00000]">
            <PanelHeader
              items={[
                { text: '0.000,', color: '-ml-[3px] text-[#ffff00]' },
                { text: 'UDPP: -0.000', color: 'text-[#00ff00]' },
              ]}
              className="h-3"
            />
            <UdppChart />
          </section>
          <section className="border-t border-[#c00000]">
            <PanelHeader items={[{ text: '0.000,', color: '-ml-[6px] text-[#00ff00]' }]} className="h-3" />
            <SwingChart />
          </section>
          <section className="border-t border-[#c00000]">
            <PanelHeader
              items={[
                { text: '0.000,', color: '-ml-[6px] text-[#00ff00]' },
                ...zeros(2, 'text-[#00ff00]'),
                { text: '总买: 0.000,', color: 'text-[#c0c0c0]' },
                { text: '总卖: 0.000,', color: 'text-[#c0dcc0]' },
              ]}
              className="h-3"
            />
            <TrendChart />
          </section>
        </main>
        <QuotePanel />
      </div>
    </div>
  );
}
